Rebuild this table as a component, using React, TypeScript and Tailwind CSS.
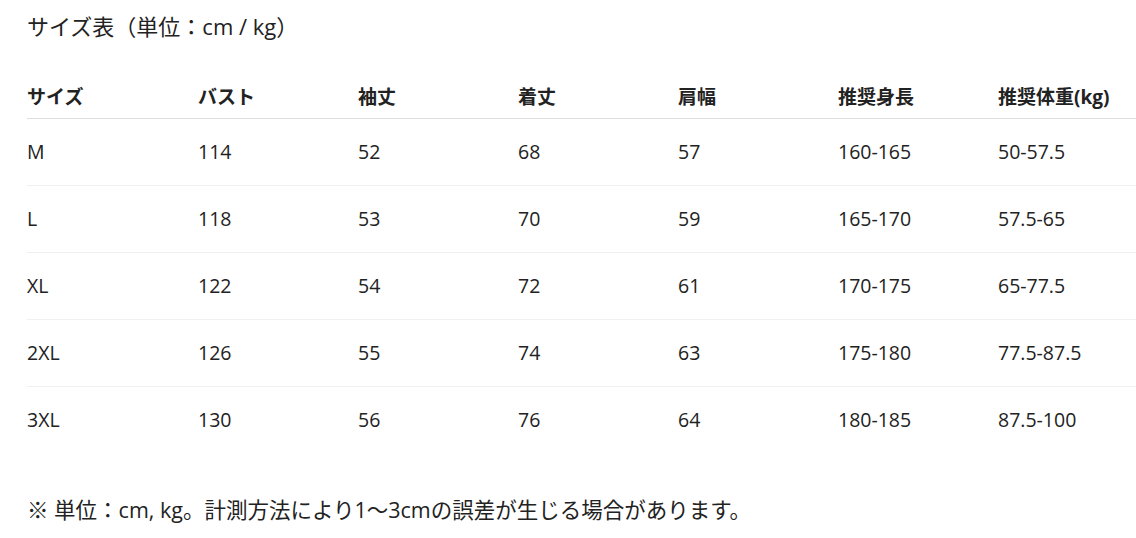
import React from 'react';

const headers = ['サイズ', 'バスト', '袖丈', '着丈', '肩幅', '推奨身長', '推奨体重(kg)'];

const rows: string[][] = [
  ['M', '114', '52', '68', '57', '160-165', '50-57.5'],
  ['L', '118', '53', '70', '59', '165-170', '57.5-65'],
  ['XL', '122', '54', '72', '61', '170-175', '65-77.5'],
  ['2XL', '126', '55', '74', '63', '175-180', '77.5-87.5'],
  ['3XL', '130', '56', '76', '64', '180-185', '87.5-100'],
];

const colW = ['w-[171px]', 'w-[160px]', 'w-[160px]', 'w-[160px]', 'w-[160px]', 'w-[160px]', 'w-[138px]'];

export default function App() {
  return (
    <div
      className="bg-white text-[#222] pl-[27px] pt-[10px]"
      style={{ fontFamily: '"Open Sans", "Noto Sans CJK JP", sans-serif' }}
    >
      <h2 className="text-[22px] leading-[32px] font-normal">サイズ表（単位：cm / kg）</h2>

      <table className="mt-[34px] border-collapse w-[1109px] table-fixed">
        <thead>
          <tr className="border-b border-[#dedede]">
            {headers.map((h, i) => (
              <th key={i} className={`${colW[i]} text-left font-bold text-[19px] h-[42px] align-middle whitespace-nowrap`}>
                {h}
              </th>
            ))}
          </tr>
        </thead>
        <tbody>
          {rows.map((r, ri) => (
            <tr key={ri} className={ri < rows.length - 1 ? 'border-b border-[#f0f0f0]' : ''}>
              {r.map((c, ci) => (
                <td key={ci} className="text-[19.5px] h-[67px] align-middle">
                  {c}
                </td>
              ))}
            </tr>
          ))}
        </tbody>
      </table>

      <p className="mt-[42px] text-[21.5px] leading-[30px]">
        ※ 単位：cm, kg。計測方法により1〜3cmの誤差が生じる場合があります。
      </p>
    </div>
  );
}
